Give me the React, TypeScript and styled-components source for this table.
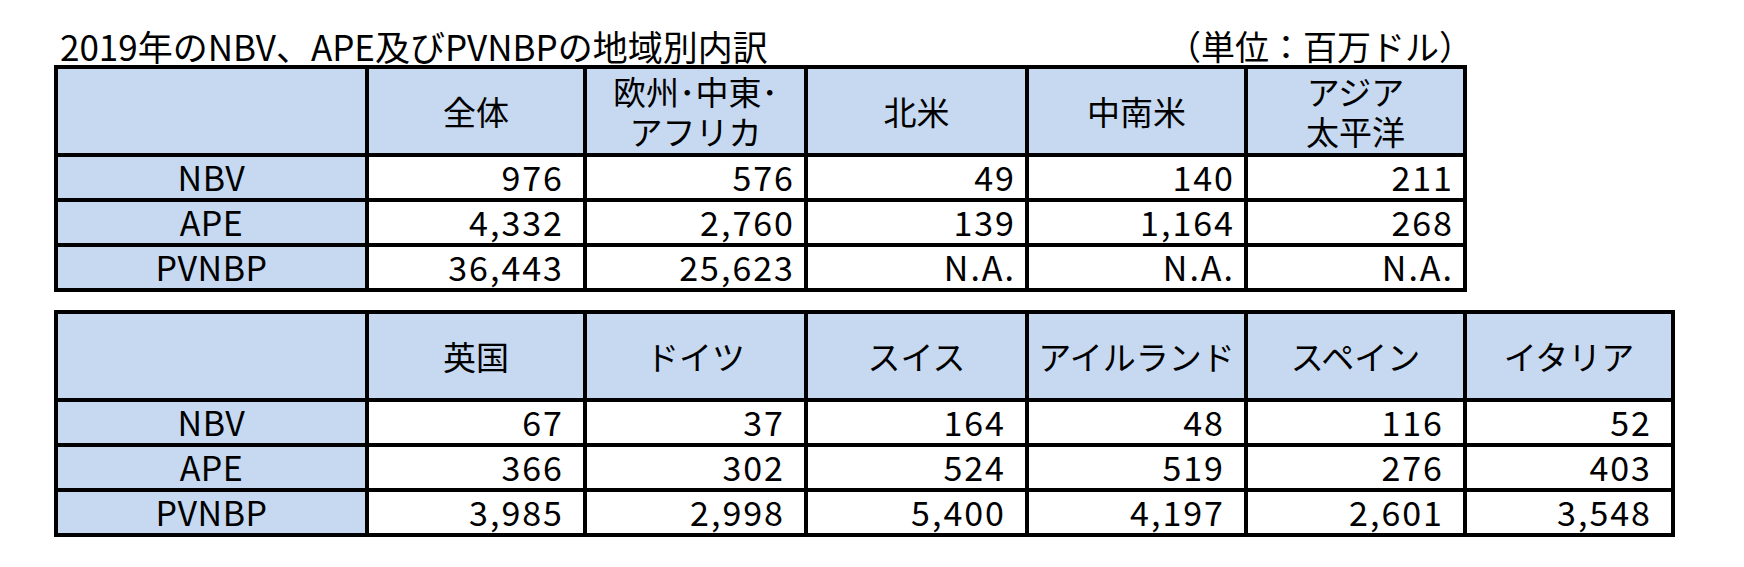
import React from "react";
import styled, { createGlobalStyle } from "styled-components";

const GlobalStyle = createGlobalStyle`
  html, body {
    margin: 0;
    padding: 0;
    background: #ffffff;
  }
  body {
    font-family: "Noto Sans CJK JP", "Noto Sans", sans-serif;
    color: #000000;
  }
`;

type Block = {
  heads: string[][];
  cols: string;
  rows: { label: string; values: string[] }[];
};

const top: Block = {
  heads: [["全体"], ["欧州･中東･", "アフリカ"], ["北米"], ["中南米"], ["アジア", "太平洋"]],
  cols: "307px 214px 217px 217px 215px 215px",
  rows: [
    { label: "NBV", values: ["976", "576", "49", "140", "211"] },
    { label: "APE", values: ["4,332", "2,760", "139", "1,164", "268"] },
    { label: "PVNBP", values: ["36,443", "25,623", "N.A.", "N.A.", "N.A."] },
  ],
};

const bottom: Block = {
  heads: [["英国"], ["ドイツ"], ["スイス"], ["アイルランド"], ["スペイン"], ["イタリア"]],
  cols: "307px 214px 217px 217px 215px 215px 204px",
  rows: [
    { label: "NBV", values: ["67", "37", "164", "48", "116", "52"] },
    { label: "APE", values: ["366", "302", "524", "519", "276", "403"] },
    { label: "PVNBP", values: ["3,985", "2,998", "5,400", "4,197", "2,601", "3,548"] },
  ],
};

const RegionTable = ({ data, wide }: { data: Block; wide?: boolean }) => (
  <Grid $cols={data.cols}>
    <HeadCell />
    {data.heads.map((h, i) => (
      <HeadCell key={i}>
        <HeadText>
          {h.map((line, j) => (
            <React.Fragment key={line}>
              {j > 0 && <br />}
              {line}
            </React.Fragment>
          ))}
        </HeadText>
      </HeadCell>
    ))}
    {data.rows.map((r) => (
      <React.Fragment key={r.label}>
        <LabelCell>{r.label}</LabelCell>
        {r.values.map((v, i) => (
          <NumCell key={i} $pad={wide || i === 0 ? 19 : 9}>
            {v}
          </NumCell>
        ))}
      </React.Fragment>
    ))}
  </Grid>
);

const App = () => {
  return (
    <Page>
      <GlobalStyle />
      <Sheet>
        <TitleRow>
          <Title>2019年のNBV、APE及びPVNBPの地域別内訳</Title>
          <Unit>（単位：百万ドル）</Unit>
        </TitleRow>
        <RegionTable data={top} />
        <Gap />
        <RegionTable data={bottom} wide />
      </Sheet>
    </Page>
  );
};

export default App;

const Page = styled.div`
  width: 1744px;
  height: 567px;
  padding: 27px 0 0 54px;
  box-sizing: border-box;
  overflow: hidden;
`;

const Sheet = styled.div`
  display: flex;
  flex-direction: column;
  align-items: flex-start;
`;

const TitleRow = styled.div`
  display: flex;
  justify-content: space-between;
  align-items: flex-end;
  width: 1413px;
  height: 38px;
`;

const Title = styled.div`
  font-size: 35px;
  line-height: 38px;
  padding-left: 6px;
  white-space: nowrap;
`;

const Unit = styled.div`
  font-size: 34px;
  line-height: 38px;
  white-space: nowrap;
  margin-right: -6px;
`;

const Gap = styled.div`
  height: 18px;
`;

const Grid = styled.div<{ $cols: string }>`
  display: grid;
  grid-template-columns: ${(p) => p.$cols};
  grid-template-rows: 84px repeat(3, 41px);
  gap: 4px;
  border: 4px solid #000;
  background: #000;
  font-size: 34px;
  font-variant-numeric: tabular-nums;
`;

const HeadCell = styled.div`
  background: #c6d9f0;
  display: flex;
  align-items: center;
  justify-content: center;
`;

const HeadText = styled.div`
  font-size: 33px;
  line-height: 40px;
  text-align: center;
  white-space: nowrap;
`;

const LabelCell = styled.div`
  background: #c6d9f0;
  display: flex;
  align-items: center;
  justify-content: center;
  line-height: 1;
  padding-bottom: 2px;
  letter-spacing: 0.5px;
`;

const NumCell = styled.div<{ $pad: number }>`
  background: #ffffff;
  display: flex;
  align-items: center;
  justify-content: flex-end;
  padding-right: ${(p) => p.$pad}px;
  padding-bottom: 2px;
  line-height: 1;
  letter-spacing: 2px;
`;
